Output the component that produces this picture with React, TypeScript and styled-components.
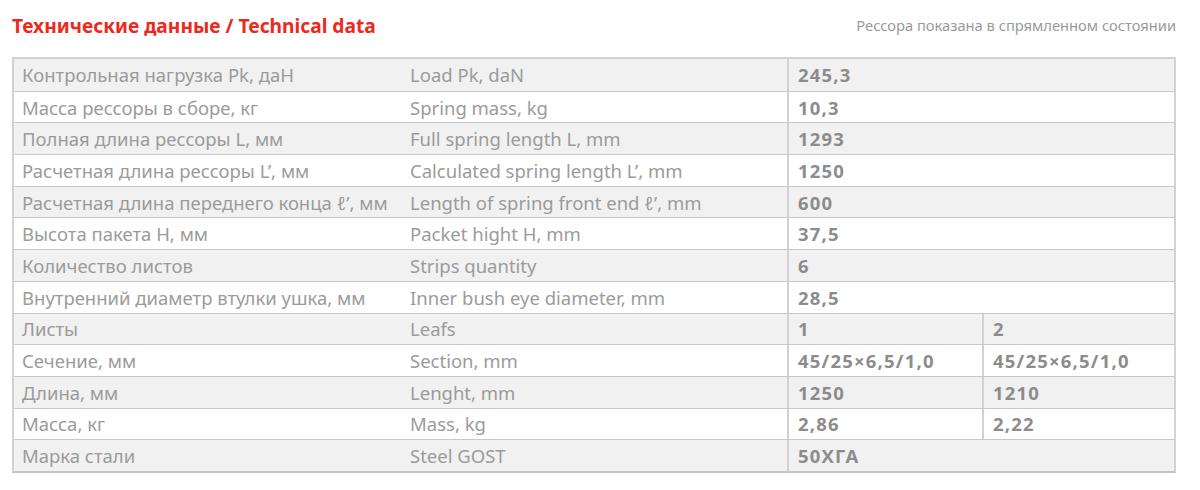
import React from "react";
import styled, { createGlobalStyle } from "styled-components";

const Global = createGlobalStyle`
  html, body { margin: 0; padding: 0; background: #ffffff; }
  body { font-family: "Noto Sans", "Open Sans", sans-serif; }
`;

const Page = styled.div`
  width: 1200px;
  height: 490px;
  box-sizing: border-box;
  padding: 0 24px 0 12px;
`;

const Header = styled.div`
  display: flex;
  justify-content: space-between;
  align-items: center;
  height: 50px;
  margin-bottom: 7px;
`;

const Title = styled.h1`
  margin: 0;
  font-size: 19.2px;
  font-weight: 700;
  color: #ea2a1e;
`;

const Note = styled.div`
  font-size: 14.7px;
  color: #9a9a9a;
`;

const Table = styled.div`
  border: 2px solid #d2d2d2;
  border-bottom-color: #c4c4c4;
  box-sizing: border-box;
  width: 1164px;
`;

const Row = styled.div<{ $shade: boolean }>`
  display: grid;
  grid-template-columns: 388px 385px 195px 1fr;
  height: 31.7px;
  box-sizing: border-box;
  background: ${(p) => (p.$shade ? "#f1f1f1" : "#ffffff")};
  & + & {
    border-top: 1px solid #c8c8c8;
  }
`;

const Label = styled.div`
  display: flex;
  align-items: center;
  padding-left: 8px;
  font-size: 18.5px;
  color: #9b9b9b;
  white-space: nowrap;
`;

const Value = styled.div<{ $span?: boolean }>`
  display: flex;
  align-items: center;
  padding-left: 9px;
  font-size: 18.5px;
  font-weight: 700;
  letter-spacing: 1.2px;
  color: #8c8c8c;
  border-left: 2px solid #d2d2d2;
  grid-column: ${(p) => (p.$span ? "span 2" : "auto")};
  white-space: nowrap;
`;

type RowData = { ru: string; en: string; v: string[] };

const rows: RowData[] = [
  { ru: "Контрольная нагрузка Pk, даН", en: "Load Pk, daN", v: ["245,3"] },
  { ru: "Масса рессоры в сборе, кг", en: "Spring mass, kg", v: ["10,3"] },
  { ru: "Полная длина рессоры L, мм", en: "Full spring length L, mm", v: ["1293"] },
  { ru: "Расчетная длина рессоры L’, мм", en: "Calculated spring length L’, mm", v: ["1250"] },
  { ru: "Расчетная длина переднего конца ℓ’, мм", en: "Length of spring front end ℓ’, mm", v: ["600"] },
  { ru: "Высота пакета H, мм", en: "Packet hight H, mm", v: ["37,5"] },
  { ru: "Количество листов", en: "Strips quantity", v: ["6"] },
  { ru: "Внутренний диаметр втулки ушка, мм", en: "Inner bush eye diameter, mm", v: ["28,5"] },
  { ru: "Листы", en: "Leafs", v: ["1", "2"] },
  { ru: "Сечение, мм", en: "Section, mm", v: ["45/25×6,5/1,0", "45/25×6,5/1,0"] },
  { ru: "Длина, мм", en: "Lenght, mm", v: ["1250", "1210"] },
  { ru: "Масса, кг", en: "Mass, kg", v: ["2,86", "2,22"] },
  { ru: "Марка стали", en: "Steel GOST", v: ["50ХГА"] },
];

export default function App() {
  return (
    <Page>
      <Global />
      <Header>
        <Title>Технические данные / Technical data</Title>
        <Note>Рессора показана в спрямленном состоянии</Note>
      </Header>
      <Table>
        {rows.map((r, i) => (
          <Row key={i} $shade={i % 2 === 0}>
            <Label>{r.ru}</Label>
            <Label>{r.en}</Label>
            {r.v.length === 1 ? (
              <Value $span>{r.v[0]}</Value>
            ) : (
              r.v.map((x, j) => <Value key={j}>{x}</Value>)
            )}
          </Row>
        ))}
      </Table>
    </Page>
  );
}
